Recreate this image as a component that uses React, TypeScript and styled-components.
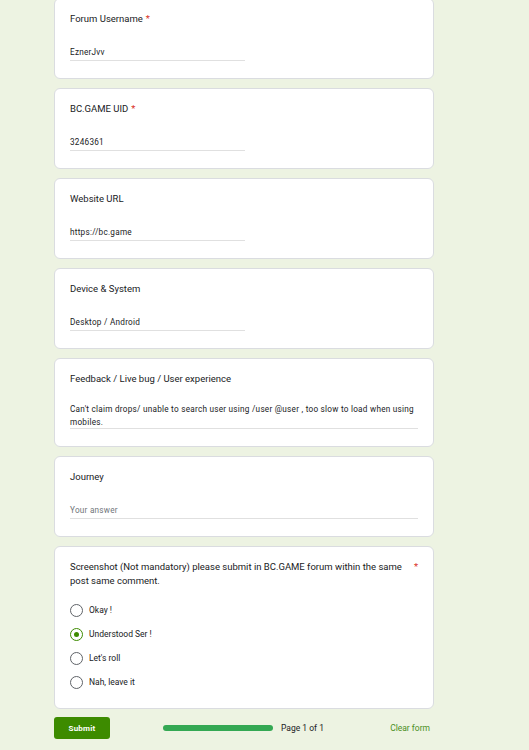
import styled, { createGlobalStyle } from "styled-components";

const GlobalStyle = createGlobalStyle`
  html, body {
    margin: 0;
    padding: 0;
    background-color: #edf3e2;
  }
  body {
    font-family: Roboto, "Liberation Sans", Arial, sans-serif;
    color: #202124;
  }
`;

const Page = styled.div`
  display: flex;
  flex-direction: column;
  gap: 9px;
  width: 380px;
  margin: -2px 0 0 54px;
  padding-bottom: 40px;
`;

const Card = styled.div`
  display: flex;
  flex-direction: column;
  background-color: white;
  border: 1px solid #dadce0;
  border-radius: 6px;
  padding: 13px 15px 17px 15px;
`;

const Title = styled.div`
  display: flex;
  font-size: 9.5px;
  line-height: 14px;
  color: #202124;
`;

const TitleText = styled.span`
  flex: 1;
`;

const Required = styled.span<{ wide?: boolean }>`
  color: #d93025;
  margin-left: ${({ wide }) => (wide ? "10px" : "3px")};
`;

const Answer = styled.div<{ full?: boolean; empty?: boolean; multiline?: boolean }>`
  width: ${({ full }) => (full ? "100%" : "175px")};
  margin-top: ${({ multiline }) => (multiline ? "17px" : "20px")};
  padding-bottom: ${({ multiline }) => (multiline ? "0" : "1px")};
  border-bottom: 1px solid #e0e0e0;
  font-size: 8.2px;
  letter-spacing: 0.25px;
  line-height: ${({ multiline }) => (multiline ? "12.5px" : "13px")};
  color: ${({ empty }) => (empty ? "#70757a" : "#202124")};
  box-sizing: border-box;
`;

const Options = styled.div`
  display: flex;
  flex-direction: column;
  gap: 11px;
  margin-top: 16px;
  padding-bottom: 2px;
`;

const Option = styled.label`
  display: flex;
  align-items: center;
  gap: 6px;
  font-size: 8.5px;
  line-height: 13px;
  color: #202124;
`;

const Radio = styled.span<{ checked?: boolean }>`
  position: relative;
  width: 13px;
  height: 13px;
  box-sizing: border-box;
  border-radius: 50%;
  border: 1.5px solid ${({ checked }) => (checked ? "#3d8b00" : "#5f6368")};
  flex-shrink: 0;

  &::after {
    content: "";
    display: ${({ checked }) => (checked ? "block" : "none")};
    position: absolute;
    top: 2.5px;
    left: 2.5px;
    width: 5px;
    height: 5px;
    border-radius: 50%;
    background-color: #3d8b00;
  }
`;

const Footer = styled.div`
  display: flex;
  align-items: center;
  margin-top: -1px;
  padding-right: 4px;
`;

const SubmitButton = styled.button`
  width: 56px;
  height: 22px;
  border: none;
  border-radius: 3px;
  background-color: #3d8b00;
  color: white;
  font-family: Roboto, "Liberation Sans", Arial, sans-serif;
  font-size: 8px;
  font-weight: bold;
  letter-spacing: 0.2px;
  cursor: pointer;
`;

const Progress = styled.div`
  display: flex;
  align-items: center;
  gap: 8px;
  margin-left: 53px;
  font-size: 8.5px;
  color: #202124;
`;

const ProgressBar = styled.div`
  width: 110px;
  height: 6px;
  border-radius: 3px;
  background-color: #34a853;
`;

const ClearForm = styled.span`
  margin-left: auto;
  font-size: 8.5px;
  color: #4b8f1d;
`;

const Notice = styled.div`
  margin-top: 7px;
  font-size: 8px;
  color: #202124;
`;

type Question = {
  title: string;
  required?: boolean;
  value?: string;
  full?: boolean;
  multiline?: boolean;
};

const questions: Question[] = [
  { title: "Forum Username", required: true, value: "EznerJvv" },
  { title: "BC.GAME UID", required: true, value: "3246361" },
  { title: "Website URL", value: "https://bc.game" },
  { title: "Device & System", value: "Desktop / Android" },
  {
    title: "Feedback / Live bug / User experience",
    value:
      "Can't claim drops/ unable to search user using /user @user , too slow to load when using mobiles.",
    full: true,
    multiline: true,
  },
  { title: "Journey", full: true },
];

const options = ["Okay !", "Understood Ser !", "Let's roll", "Nah, leave it"];

const App = () => {
  return (
    <>
      <GlobalStyle />
      <Page>
        {questions.map((q) => (
          <Card key={q.title}>
            <Title>
              <span>{q.title}</span>
              {q.required && <Required>*</Required>}
            </Title>
            <Answer full={q.full} empty={!q.value} multiline={q.multiline}>
              {q.value || "Your answer"}
            </Answer>
          </Card>
        ))}
        <Card>
          <Title>
            <TitleText>
              Screenshot (Not mandatory) please submit in BC.GAME forum within
              the same post same comment.
            </TitleText>
            <Required wide>*</Required>
          </Title>
          <Options>
            {options.map((o) => (
              <Option key={o}>
                <Radio checked={o === "Understood Ser !"} />
                {o}
              </Option>
            ))}
          </Options>
        </Card>
        <Footer>
          <SubmitButton>Submit</SubmitButton>
          <Progress>
            <ProgressBar />
            Page 1 of 1
          </Progress>
          <ClearForm>Clear form</ClearForm>
        </Footer>
        <Notice>Never submit passwords through Google Forms.</Notice>
      </Page>
    </>
  );
};

export default App;
